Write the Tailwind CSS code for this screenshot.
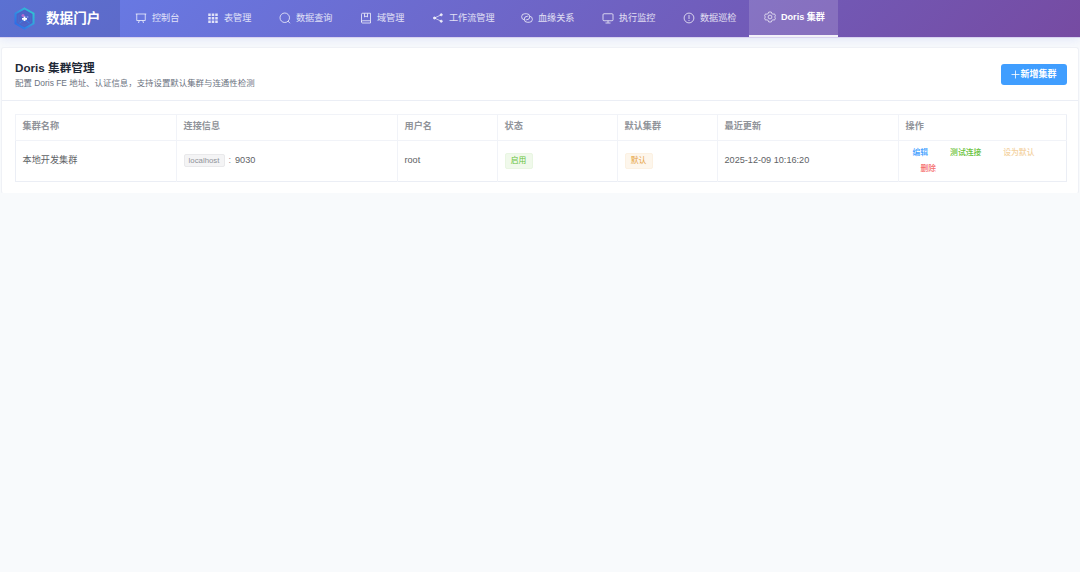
<!DOCTYPE html>
<html lang="zh-CN">
<head>
    <meta charset="utf-8">
    <meta name="viewport" content="width=device-width, initial-scale=1.0">
    <title>数据门户 - Doris 集群</title>
    <script src="https://cdn.jsdelivr.net/npm/@tailwindcss/browser@4"></script>
</head>
<body class="min-h-screen bg-[#f8fafc] font-['Liberation_Sans','Noto_Sans_CJK_SC',sans-serif] text-[9.15px] text-[#606266]">
    <!-- top bar -->
    <header class="flex h-[37px] bg-[linear-gradient(135deg,#667eea_0%,#764ba2_100%)] shadow-[0_1px_0_#d9d3f0,0_2px_10px_rgba(102,126,234,0.16)]">
        <div class="flex w-[120px] items-center bg-black/10 pl-[14px]">
            <svg class="-mt-px h-[23px] w-[21px] shrink-0" viewBox="0 0 42 46" fill="none">
                <defs>
                    <linearGradient id="hex" x1="1" y1="0" x2="0" y2="1">
                        <stop offset="0" stop-color="#2fd0d0"/>
                        <stop offset="0.5" stop-color="#3297e0"/>
                        <stop offset="1" stop-color="#2b62ea"/>
                    </linearGradient>
                </defs>
                <path d="M21 3 39 13v20L21 43 3 33V13z" stroke="url(#hex)" stroke-width="4" fill="#4d62c8"/>
                <path d="M21 10 33 17v13l-12 7-12-7V17z" stroke="#4a72cc" stroke-width="1"/>
                <path d="M11 32l10-7 10 7" stroke="#3a83e6" stroke-width="2"/>
                <circle cx="18" cy="17" r="3" fill="#b56bd0"/>
                <circle cx="27" cy="20" r="2" fill="#7e8ee8"/>
                <path d="M21 19v9M16 23.500h10" stroke="#fff" stroke-width="3.500"/>
            </svg>
            <span class="ml-[11px] pt-px text-[13.6px] font-bold whitespace-nowrap text-white">数据门户</span>
        </div>
        <nav class="flex text-[9.1px] whitespace-nowrap text-white/80">
            <a class="flex w-[72px] items-center pl-[15px]">
                <svg class="-mt-px mr-[5px] h-3 w-3 shrink-0" viewBox="0 0 24 24" fill="none" stroke="currentColor" stroke-width="1.8"><path d="M1.500 4h21M3.500 4v13h17V4M8.500 17 7 22M15.500 17l1.500 5"/></svg>
                控制台
            </a>
            <a class="flex w-[72px] items-center pl-[15px]">
                <svg class="-mt-px mr-[5px] h-3 w-3 shrink-0" viewBox="0 0 24 24" fill="currentColor"><path d="M2.500 3h5v5h-5zM9.500 3h5v5h-5zM16.500 3h5v5h-5zM2.500 10h5v5h-5zM9.500 10h5v5h-5zM16.500 10h5v5h-5zM2.500 17h5v5h-5zM9.500 17h5v5h-5zM16.500 17h5v5h-5z"/></svg>
                表管理
            </a>
            <a class="flex w-[81px] items-center pl-[15px]">
                <svg class="-mt-px mr-[5px] h-3 w-3 shrink-0" viewBox="0 0 24 24" fill="none" stroke="currentColor" stroke-width="1.8"><circle cx="11.500" cy="11.500" r="9.500"/><path d="m18 18 4 4.500"/></svg>
                数据查询
            </a>
            <a class="flex w-[72px] items-center pl-[15px]">
                <svg class="-mt-px mr-[5px] h-3 w-3 shrink-0" viewBox="0 0 24 24" fill="none" stroke="currentColor" stroke-width="1.8"><path d="M21 17.500V2.500H5a2 2 0 0 0-2 2V20a2 2 0 0 0 2 2h16v-4.500H5a2 2 0 0 0-2 2M9 3v7l3-2 3 2V3"/></svg>
                域管理
            </a>
            <a class="flex w-[90px] items-center pl-[15px]">
                <svg class="-mt-px mr-[5px] h-3 w-3 shrink-0" viewBox="0 0 24 24" fill="currentColor" stroke="currentColor" stroke-width="1.6"><path d="M18.500 5.500 5 12l13.500 6.500" fill="none"/><circle cx="18.500" cy="5.500" r="2.200"/><circle cx="5" cy="12" r="2.200"/><circle cx="18.500" cy="18.500" r="2.200"/></svg>
                工作流管理
            </a>
            <a class="flex w-[81px] items-center pl-[14px]">
                <svg class="-mt-px mr-[5px] h-3 w-3 shrink-0" viewBox="0 0 24 24" fill="none" stroke="currentColor" stroke-width="1.8"><path d="M7 15.500A6 6 0 0 1 7.500 3.500h4a6 6 0 0 1 0 12h-2"/><path d="M17 8.500a6 6 0 0 1-.5 12h-4a6 6 0 0 1 0-12h2"/></svg>
                血缘关系
            </a>
            <a class="flex w-[81px] items-center pl-[14px]">
                <svg class="-mt-px mr-[5px] h-3 w-3 shrink-0" viewBox="0 0 24 24" fill="none" stroke="currentColor" stroke-width="1.8"><rect x="2" y="3.500" width="20" height="14" rx="2"/><path d="M12 17.500v4M7 22h10"/></svg>
                执行监控
            </a>
            <a class="flex w-20 items-center pl-[14px]">
                <svg class="-mt-px mr-[5px] h-3 w-3 shrink-0" viewBox="0 0 24 24" fill="none" stroke="currentColor" stroke-width="1.8"><circle cx="12" cy="12" r="9.800"/><path d="M12 6v8M12 16v2"/></svg>
                数据巡检
            </a>
            <a class="flex w-[89px] items-center border-b-2 border-white/90 bg-white/15 pl-[15px] font-bold text-white">
                <svg class="-mt-px mr-[5px] h-3 w-3 shrink-0" viewBox="0 0 24 24" fill="none" stroke="currentColor" stroke-opacity="0.85" stroke-width="1.600"><path d="M9.500 2h5l1 3 2.500 1.400 3-.6 2 4-2 2.200 2 2.200-2 4-3-.6-2.500 1.400-1 3h-5l-1-3L6 17.600l-3 .6-2-4L3 12 1 9.800l2-4 3 .6L8.500 5z"/><circle cx="12" cy="12" r="3.800"/></svg>
                Doris 集群
            </a>
        </nav>
    </header>

    <!-- cluster card -->
    <main class="px-px pt-[10px]">
        <section class="h-[147px] rounded-[3px] border border-[#eff1f6] border-b-[#f8fafc] bg-white">
            <div class="flex h-[53px] items-center justify-between border-b border-[#ebeef5] pr-[11px] pl-[13px]">
                <div class="pt-[3px]">
                    <h1 class="text-[11.65px] leading-[16px] font-bold text-[#1f2937]">Doris 集群管理</h1>
                    <p class="text-[8.44px] leading-[15px] text-[#6b7280]">配置 Doris FE 地址、认证信息，支持设置默认集群与连通性检测</p>
                </div>
                <button class="flex h-[21px] w-[66px] items-center justify-center rounded-[3px] bg-[#409eff] pt-px text-[9px] font-bold text-white">
                    <svg class="h-[9px] w-[9px]" viewBox="0 0 18 18" stroke="currentColor" stroke-width="1.6"><path d="M9 1v16M1 9h16"/></svg>
                    新增集群
                </button>
            </div>
            <div class="pt-[12.500px] pr-[11px] pl-[12.500px]">
                <table class="w-full table-fixed border-collapse border border-[#ebeef5] text-left">
                    <colgroup>
                        <col class="w-[161px]">
                        <col class="w-[221px]">
                        <col class="w-[100px]">
                        <col class="w-[120px]">
                        <col class="w-[100px]">
                        <col class="w-[181px]">
                        <col>
                    </colgroup>
                    <thead>
                        <tr class="h-[26px] text-[#909399]">
                            <th class="border border-[#f1f3f8] px-[7px] py-0">集群名称</th>
                            <th class="border border-[#f1f3f8] px-[7px] py-0">连接信息</th>
                            <th class="border border-[#f1f3f8] px-[7px] py-0">用户名</th>
                            <th class="border border-[#f1f3f8] px-[7px] py-0">状态</th>
                            <th class="border border-[#f1f3f8] px-[7px] py-0">默认集群</th>
                            <th class="border border-[#f1f3f8] px-[7px] py-0">最近更新</th>
                            <th class="border-y border-l border-[#f1f3f8] px-[7px] py-0">操作</th>
                        </tr>
                    </thead>
                    <tbody>
                        <tr class="h-[41px]">
                            <td class="border-r border-[#f1f3f8] px-[7px] py-0">本地开发集群</td>
                            <td class="border-r border-[#f1f3f8] px-[7px] py-0">
                                <div class="flex items-center">
                                    <span class="flex h-[13px] w-[41px] items-center justify-center rounded-[2px] border border-[#e9e9eb] bg-[#f4f4f5] text-[7.8px] text-[#909399]">localhost</span>
                                    <span class="mr-[4px] ml-[4px] text-[#909399]">:</span>
                                    <span>9030</span>
                                </div>
                            </td>
                            <td class="border-r border-[#f1f3f8] px-[7px] py-0">root</td>
                            <td class="border-r border-[#f1f3f8] px-[7px] py-0">
                                <span class="flex h-4 w-[28px] items-center justify-center rounded-[2px] border border-[#e9f6e2] bg-[#f0f9eb] text-[7.8px] text-[#67c23a]">启用</span>
                            </td>
                            <td class="border-r border-[#f1f3f8] px-[7px] py-0">
                                <span class="flex h-4 w-[28px] items-center justify-center rounded-[2px] border border-[#fcf1e2] bg-[#fdf6ec] text-[7.8px] text-[#e6a23c]">默认</span>
                            </td>
                            <td class="border-r border-[#f1f3f8] px-[7px] py-0">2025-12-09 10:16:20</td>
                            <td class="py-0 pl-[14px] text-[7.8px] leading-[16px] font-medium">
                                <div class="flex gap-[22px]">
                                    <a class="text-[#409eff]">编辑</a>
                                    <a class="text-[#67c23a]">测试连接</a>
                                    <a class="text-[#f3d19e]">设为默认</a>
                                </div>
                                <a class="block pl-[8px] text-[#f56c6c]">删除</a>
                            </td>
                        </tr>
                    </tbody>
                </table>
            </div>
        </section>
    </main>
</body>
</html>
